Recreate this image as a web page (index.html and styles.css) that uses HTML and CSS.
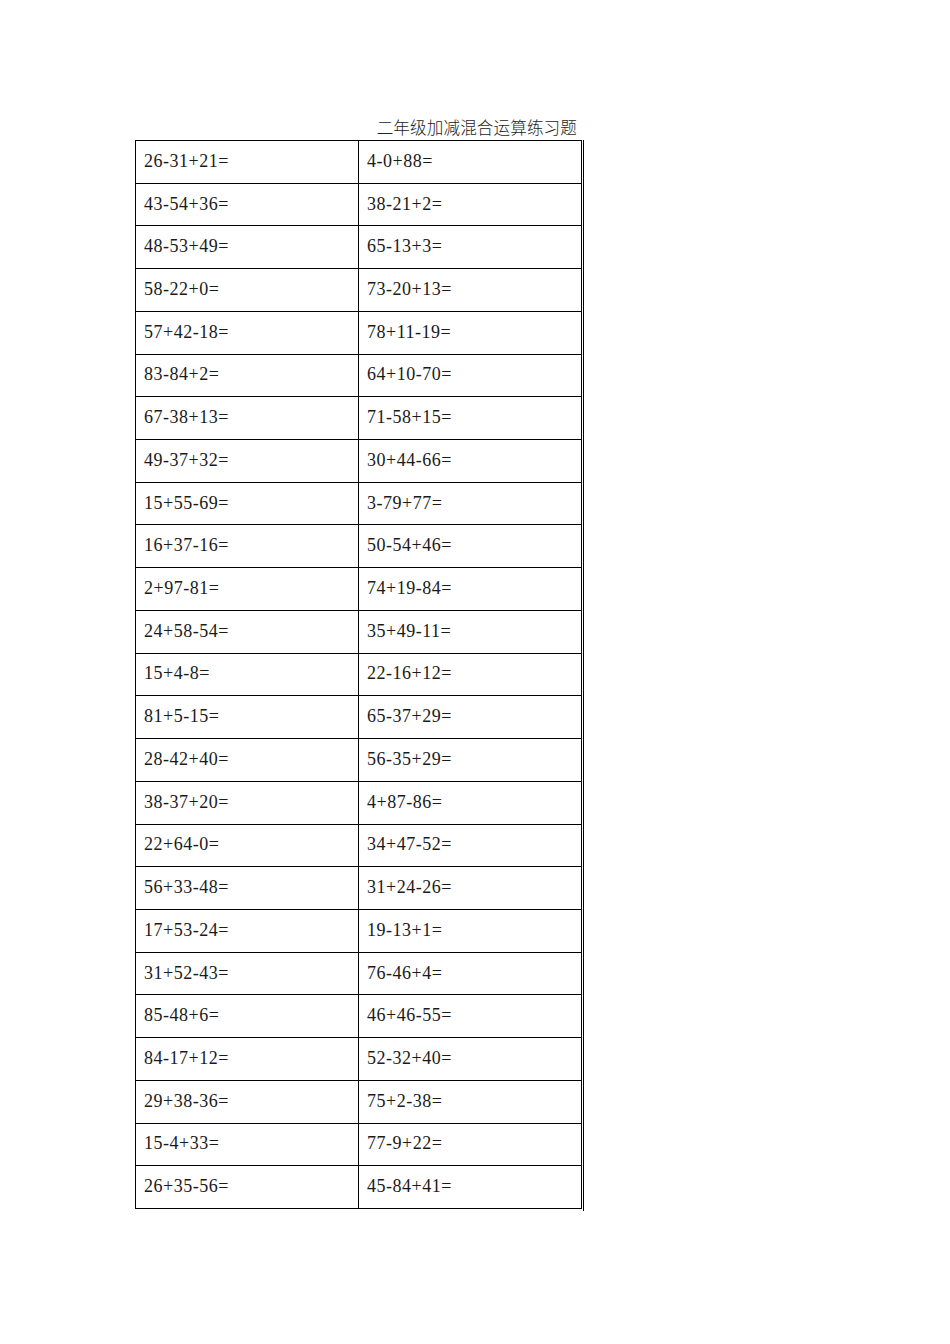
FILE: index.html
```html
<!DOCTYPE html>
<html>
<head>
<meta charset="utf-8">
<link rel="stylesheet" href="styles.css">
</head>
<body>
<div class="page">
  <div class="sheet">
    <div class="title">二年级加减混合运算练习题</div>
    <div class="frame">
      <table class="grid">
        <tr><td>26-31+21=</td><td>4-0+88=</td></tr>
        <tr><td>43-54+36=</td><td>38-21+2=</td></tr>
        <tr><td>48-53+49=</td><td>65-13+3=</td></tr>
        <tr><td>58-22+0=</td><td>73-20+13=</td></tr>
        <tr><td>57+42-18=</td><td>78+11-19=</td></tr>
        <tr><td>83-84+2=</td><td>64+10-70=</td></tr>
        <tr><td>67-38+13=</td><td>71-58+15=</td></tr>
        <tr><td>49-37+32=</td><td>30+44-66=</td></tr>
        <tr><td>15+55-69=</td><td>3-79+77=</td></tr>
        <tr><td>16+37-16=</td><td>50-54+46=</td></tr>
        <tr><td>2+97-81=</td><td>74+19-84=</td></tr>
        <tr><td>24+58-54=</td><td>35+49-11=</td></tr>
        <tr><td>15+4-8=</td><td>22-16+12=</td></tr>
        <tr><td>81+5-15=</td><td>65-37+29=</td></tr>
        <tr><td>28-42+40=</td><td>56-35+29=</td></tr>
        <tr><td>38-37+20=</td><td>4+87-86=</td></tr>
        <tr><td>22+64-0=</td><td>34+47-52=</td></tr>
        <tr><td>56+33-48=</td><td>31+24-26=</td></tr>
        <tr><td>17+53-24=</td><td>19-13+1=</td></tr>
        <tr><td>31+52-43=</td><td>76-46+4=</td></tr>
        <tr><td>85-48+6=</td><td>46+46-55=</td></tr>
        <tr><td>84-17+12=</td><td>52-32+40=</td></tr>
        <tr><td>29+38-36=</td><td>75+2-38=</td></tr>
        <tr><td>15-4+33=</td><td>77-9+22=</td></tr>
        <tr><td>26+35-56=</td><td>45-84+41=</td></tr>
      </table>
    </div>
  </div>
</div>
</body>
</html>
```
FILE: styles.css
```css
html, body {
  margin: 0;
  padding: 0;
  background: #ffffff;
}
.page {
  width: 950px;
  height: 1344px;
  padding: 116px 0 0 135px;
  box-sizing: border-box;
  font-family: "Liberation Serif", "Noto Sans CJK SC", serif;
  color: #1a1a1a;
}
.sheet {
  width: 450px;
}
.title {
  width: 447px;
  text-align: right;
  padding-right: 5px;
  box-sizing: border-box;
  font-family: "Noto Sans CJK SC", sans-serif;
  font-size: 16.6px;
  font-weight: 300;
  line-height: 22px;
  height: 24px;
  color: #222;
  letter-spacing: 0.1px;
}
.frame {
  display: inline-block;
  padding-right: 1px;
  padding-bottom: 2px;
  border-right: 1px solid #000;
}
.grid {
  border-collapse: collapse;
  width: 447px;
  height: 1069px;
  table-layout: fixed;
}
.grid td {
  border: 1px solid #000;
  padding: 0 0 2px 8px;
  font-size: 18px;
  letter-spacing: 0.5px;
  vertical-align: middle;
  white-space: nowrap;
  line-height: 20px;
  color: #1a1a1a;
}
.grid td:first-child {
  width: 214px;
}
```
